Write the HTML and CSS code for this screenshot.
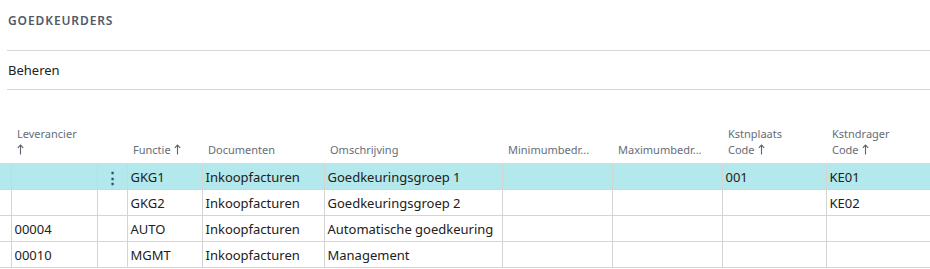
FILE: index.html
```html
<!DOCTYPE html>
<html lang="nl">
<head>
    <meta charset="UTF-8">
    <title>Goedkeurders</title>
    <link rel="stylesheet" href="styles.css">
</head>
<body>

<div class="page-head">
    <h1 class="page-title">Goedkeurders</h1>
    <div class="action-bar">
        <span class="action">Beheren</span>
    </div>
</div>

<table class="grid">
    <colgroup>
        <col class="c-mark">
        <col class="c-vendor">
        <col class="c-menu">
        <col class="c-func">
        <col class="c-docs">
        <col class="c-desc">
        <col class="c-amount">
        <col class="c-amount">
        <col class="c-code">
        <col class="c-code">
    </colgroup>
    <thead>
        <tr>
            <th></th>
            <th>Leverancier<br><svg class="sort first" viewBox="0 0 7 11"><path d="M3.5 10.5V1M0.8 3.8L3.5 1L6.2 3.8"/></svg></th>
            <th></th>
            <th>Functie <svg class="sort" viewBox="0 0 7 11"><path d="M3.5 10.5V1M0.8 3.8L3.5 1L6.2 3.8"/></svg></th>
            <th>Documenten</th>
            <th>Omschrijving</th>
            <th>Minimumbedr...</th>
            <th>Maximumbedr...</th>
            <th>Kstnplaats<br>Code <svg class="sort" viewBox="0 0 7 11"><path d="M3.5 10.5V1M0.8 3.8L3.5 1L6.2 3.8"/></svg></th>
            <th>Kstndrager<br>Code <svg class="sort" viewBox="0 0 7 11"><path d="M3.5 10.5V1M0.8 3.8L3.5 1L6.2 3.8"/></svg></th>
        </tr>
    </thead>
    <tbody>
        <tr class="selected">
            <td></td>
            <td></td>
            <td class="menu-cell"><span class="dots">&#8942;</span></td>
            <td>GKG1</td>
            <td>Inkoopfacturen</td>
            <td>Goedkeuringsgroep 1</td>
            <td></td>
            <td></td>
            <td>001</td>
            <td>KE01</td>
        </tr>
        <tr>
            <td></td>
            <td></td>
            <td></td>
            <td>GKG2</td>
            <td>Inkoopfacturen</td>
            <td>Goedkeuringsgroep 2</td>
            <td></td>
            <td></td>
            <td></td>
            <td>KE02</td>
        </tr>
        <tr>
            <td></td>
            <td>00004</td>
            <td></td>
            <td>AUTO</td>
            <td>Inkoopfacturen</td>
            <td>Automatische goedkeuring</td>
            <td></td>
            <td></td>
            <td></td>
            <td></td>
        </tr>
        <tr>
            <td></td>
            <td>00010</td>
            <td></td>
            <td>MGMT</td>
            <td>Inkoopfacturen</td>
            <td>Management</td>
            <td></td>
            <td></td>
            <td></td>
            <td></td>
        </tr>
    </tbody>
</table>

</body>
</html>
```

FILE: styles.css
```css
body {
    font-family: "Noto Sans", "Open Sans", sans-serif;
    margin: 0;
    padding: 0;
    background-color: #fff;
    color: #212121;
}

.page-head {
    padding-left: 7px;
}

.page-title {
    margin: 0;
    padding: 12px 0 0 1px;
    height: 51px;
    box-sizing: border-box;
    font-size: 12px;
    font-weight: 600;
    letter-spacing: 0.9px;
    text-transform: uppercase;
    color: #505a68;
    border-bottom: 1px solid #d6d6d6;
}

.action-bar {
    height: 38px;
    display: flex;
    align-items: center;
    padding-left: 1px;
    border-bottom: 1px solid #d6d6d6;
}

.action {
    font-size: 13px;
    color: #212121;
}

/* List grid */
.grid {
    margin-top: 24px;
    width: 930px;
    table-layout: fixed;
    border-collapse: collapse;
    font-size: 13px;
}

.c-mark { width: 11px; }
.c-vendor { width: 86px; }
.c-menu { width: 30px; }
.c-func { width: 75px; }
.c-docs { width: 122px; }
.c-desc { width: 178px; }
.c-amount { width: 110px; }
.c-code { width: 104px; }

.grid th {
    height: 44px;
    padding: 0 6px 5px;
    vertical-align: bottom;
    text-align: left;
    font-weight: 400;
    font-size: 11px;
    line-height: 16px;
    color: #666d78;
    white-space: nowrap;
    overflow: hidden;
    border-bottom: 1px solid #dcdcdc;
}

.grid th .sort {
    width: 7px;
    height: 11px;
    margin-left: 1px;
    vertical-align: -1px;
    fill: none;
    stroke: #5c6370;
    stroke-width: 1.1;
}

.grid th .sort.first {
    margin-left: 0;
}

.grid td {
    height: 25px;
    padding: 0 3px;
    white-space: nowrap;
    overflow: hidden;
    border: 1px solid #d4d4d4;
    border-top: none;
}

.grid td:first-child {
    border-left: none;
}

.grid td:last-child {
    border-right: none;
}

.grid tr.selected td {
    background-color: #b3e8ec;
}

.menu-cell {
    text-align: center;
}

.dots {
    color: #2c4f73;
    font-weight: 700;
    font-size: 15px;
}
```
